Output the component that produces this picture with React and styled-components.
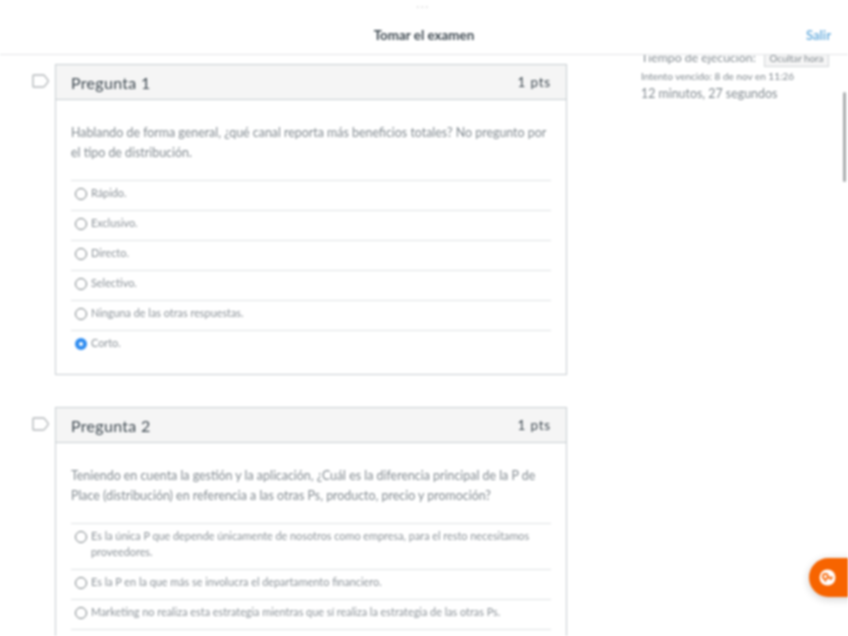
import React from "react";
import styled, { createGlobalStyle } from "styled-components";

const Global = createGlobalStyle`
  html, body { margin: 0; padding: 0; background: #fff; }
  * { box-sizing: border-box; }
`;

const questions = [
  {
    title: "Pregunta 1",
    text: "Hablando de forma general, ¿qué canal reporta más beneficios totales? No pregunto por el tipo de distribución.",
    options: ["Rápido.", "Exclusivo.", "Directo.", "Selectivo.", "Ninguna de las otras respuestas.", "Corto."],
    selected: 5,
  },
  {
    title: "Pregunta 2",
    text: "Teniendo en cuenta la gestión y la aplicación, ¿Cuál es la diferencia principal de la P de Place (distribución) en referencia a las otras Ps, producto, precio y promoción?",
    options: [
      "Es la única P que depende únicamente de nosotros como empresa, para el resto necesitamos proveedores.",
      "Es la P en la que más se involucra el departamento financiero.",
      "Marketing no realiza esta estrategia mientras que sí realiza la estrategia de las otras Ps.",
    ],
    continues: true,
  },
];

function App() {
  return (
    <Page>
      <Global />
      <Header>
        <Dots>•••</Dots>
        <HeaderTitle>Tomar el examen</HeaderTitle>
        <ExitLink>Salir</ExitLink>
      </Header>
      <Main>
        <Questions>
          {questions.map((q) => (
            <QuestionRow key={q.title}>
              <FlagIcon viewBox="0 0 17 14">
                <path d="M1.6 1h9.6q.9 0 1.5.8l3.3 4.4q.5.8 0 1.6l-3.3 4.4q-.6.8-1.5.8H1.6q-.6 0-.6-.6V1.6q0-.6.6-.6z" fill="none" stroke="#b4b8bb" strokeWidth="1.4" />
              </FlagIcon>
              <Card>
                <CardHeader>
                  <CardTitle>{q.title}</CardTitle>
                  <Points>1 pts</Points>
                </CardHeader>
                <CardBody>
                  <QuestionText>{q.text}</QuestionText>
                  <Options $continues={q.continues}>
                    {q.options.map((opt, i) => (
                      <Option key={opt}>
                        <Radio $checked={q.selected === i} />
                        <OptionLabel>{opt}</OptionLabel>
                      </Option>
                    ))}
                  </Options>
                </CardBody>
              </Card>
            </QuestionRow>
          ))}
        </Questions>
        <Sidebar>
          <TimeRow>
            <TimeLabel>Tiempo de ejecución:</TimeLabel>
            <HideButton>Ocultar hora</HideButton>
          </TimeRow>
          <DueText>Intento vencido: 8 de nov en 11:26</DueText>
          <Elapsed>12 minutos, 27 segundos</Elapsed>
        </Sidebar>
      </Main>
      <ScrollThumb />
      <HelpButton>
        <HelpIcon viewBox="0 0 16 16">
          <circle cx="8" cy="8" r="7.5" fill="#fff" />
          <circle cx="6" cy="7" r="2.4" fill="none" stroke="#f76400" strokeWidth="1.5" />
          <path d="M8 8h5M11 8v2.4M6 10v2" fill="none" stroke="#f76400" strokeWidth="1.5" />
        </HelpIcon>
      </HelpButton>
    </Page>
  );
}

export default App;

const Page = styled.div`
  position: relative;
  width: 848px;
  height: 636px;
  overflow: hidden;
  background: #fff;
  font-family: "Lato", sans-serif;
  filter: blur(0.8px);
`;

const Header = styled.header`
  position: absolute;
  top: 0;
  left: 0;
  right: 0;
  z-index: 2;
  height: 55px;
  background: #fff;
  border-bottom: 1px solid #e3e5e7;
  display: flex;
  align-items: center;
  justify-content: center;
  padding-top: 15px;
`;

const Dots = styled.span`
  position: absolute;
  top: 3px;
  left: 416px;
  font-size: 6px;
  letter-spacing: 1px;
  color: #e6e6e6;
`;

const HeaderTitle = styled.h1`
  margin: 0;
  font-size: 13.4px;
  font-weight: 700;
  color: #3f4a52;
`;

const ExitLink = styled.a`
  position: absolute;
  right: 17px;
  top: 27px;
  font-size: 13px;
  font-weight: 700;
  color: #74b3e0;
`;

const Main = styled.main`
  display: flex;
  padding-top: 50px;
`;

const Questions = styled.div`
  width: 567px;
  padding-top: 14px;
  display: flex;
  flex-direction: column;
  gap: 32px;
  flex-shrink: 0;
`;

const QuestionRow = styled.section`
  display: flex;
  align-items: flex-start;
`;

const FlagIcon = styled.svg`
  width: 17px;
  height: 14px;
  margin: 10px 6px 0 32px;
  flex-shrink: 0;
`;

const Card = styled.article`
  width: 512px;
  border: 1.5px solid #c7cdd1;
`;

const CardHeader = styled.div`
  height: 35px;
  padding: 0 15px;
  display: flex;
  align-items: center;
  justify-content: space-between;
  background: #f5f5f5;
  border-bottom: 1.5px solid #c7cdd1;
`;

const CardTitle = styled.h2`
  margin: 0;
  font-size: 16px;
  font-weight: 400;
  letter-spacing: 0.3px;
  color: #3f4a52;
`;

const Points = styled.span`
  font-size: 13.5px;
  font-weight: 400;
  letter-spacing: 0.8px;
  color: #3f4a52;
`;

const CardBody = styled.div`
  padding: 23px 15px 14px;
`;

const QuestionText = styled.p`
  margin: 0 0 17px;
  font-size: 12.4px;
  line-height: 20px;
  color: #838b91;
`;

const Options = styled.div`
  display: flex;
  flex-direction: column;
  border-bottom: ${(p) => (p.$continues ? "1px solid #dfe2e4" : "none")};
`;

const Option = styled.label`
  display: flex;
  align-items: flex-start;
  padding: 4px 0 9px 4px;
  border-top: 1px solid #dfe2e4;
`;

const Radio = styled.span`
  width: 12px;
  height: 12px;
  margin: 3px 4px 0 0;
  flex-shrink: 0;
  border-radius: 50%;
  border: ${(p) => (p.$checked ? "4px solid #2f8cf0" : "1.5px solid #7a8186")};
  background: #fff;
`;

const OptionLabel = styled.span`
  font-size: 10.85px;
  line-height: 16px;
  color: #8c9399;
`;

const Sidebar = styled.aside`
  margin-left: 74px;
  width: 190px;
  color: #838b91;
`;

const TimeRow = styled.div`
  display: flex;
  align-items: flex-end;
  justify-content: space-between;
  width: 188px;
  height: 17px;
`;

const TimeLabel = styled.span`
  font-size: 12.3px;
  line-height: 14px;
  margin-bottom: 2px;
`;

const HideButton = styled.button`
  width: 65px;
  height: 18px;
  padding: 0;
  background: #f5f5f5;
  border: 1px solid #d3d6d8;
  font-family: inherit;
  font-size: 9.8px;
  color: #838b91;
`;

const DueText = styled.p`
  margin: 3px 0 0;
  font-size: 10px;
  line-height: 12px;
`;

const Elapsed = styled.p`
  margin: 4px 0 0;
  font-size: 12.4px;
  line-height: 16px;
`;

const ScrollThumb = styled.div`
  position: absolute;
  top: 92px;
  right: 2px;
  width: 3px;
  height: 90px;
  border-radius: 2px;
  background: #a9acae;
`;

const HelpButton = styled.button`
  position: absolute;
  top: 558px;
  left: 809px;
  width: 50px;
  height: 39px;
  border: none;
  border-radius: 20px 0 0 20px;
  background: #f76400;
  box-shadow: 0 2px 8px rgba(0, 0, 0, 0.2);
  padding: 0 0 0 10px;
  display: flex;
  align-items: center;
`;

const HelpIcon = styled.svg`
  width: 17px;
  height: 17px;
`;
